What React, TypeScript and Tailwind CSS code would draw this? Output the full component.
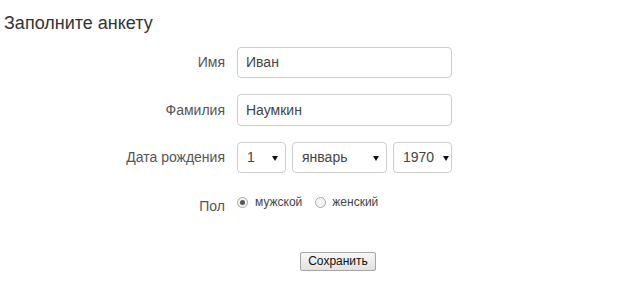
import React from "react";

const Arrow = () => (
  <svg width="6" height="6" viewBox="0 0 6 6" className="block">
    <path d="M0 1 L6 1 L3 6 Z" fill="#111" />
  </svg>
);

const Sel = ({ w, text, pr }: { w: string; text: string; pr: string }) => (
  <div
    className={`${w} ${pr} h-[31px] border border-[#cccccc] rounded-[4px] bg-white flex items-center justify-between pl-[9px] text-[14px] text-[#444]`}
  >
    <span>{text}</span>
    <Arrow />
  </div>
);

export default function App() {
  return (
    <div
      className="w-[626px] h-[283px] bg-white relative"
      style={{ fontFamily: '"Liberation Sans", Arial, sans-serif' }}
    >
      <div className="pt-[13px] pl-[4px] text-[18px] leading-[21px] text-[#333]">
        Заполните анкету
      </div>
      <div className="mt-[13px] grid grid-cols-[225px_215px] gap-x-[12px] text-[14px]">
        <div className="h-[31px] flex items-center justify-end text-[#555]">Имя</div>
        <div className="h-[31px] border border-[#cccccc] rounded-[4px] flex items-center pl-[8px] text-[#444]">
          Иван
        </div>

        <div className="mt-[16px] h-[32px] flex items-center justify-end text-[#555]">Фамилия</div>
        <div className="mt-[16px] h-[32px] border border-[#cccccc] rounded-[4px] flex items-center pl-[8px] text-[#444]">
          Наумкин
        </div>

        <div className="mt-[16px] h-[31px] flex items-center justify-end text-[#555]">Дата рождения</div>
        <div className="mt-[16px] h-[31px] flex gap-[6px]">
          <Sel w="w-[49px]" pr="pr-[7px]" text="1" />
          <Sel w="w-[95px]" pr="pr-[7px]" text="январь" />
          <Sel w="w-[59px]" pr="pr-[2px]" text="1970" />
        </div>

        <div className="mt-[19px] h-[20px] flex items-center justify-end text-[#555] pt-[8px]">Пол</div>
        <div className="mt-[19px] h-[20px] flex items-center text-[12px] text-[#444]">
          <span className="w-[11px] h-[11px] rounded-full border border-[#aaa] bg-[#f4f4f4] flex items-center justify-center">
            <span className="w-[5px] h-[5px] rounded-full bg-[#555]" />
          </span>
          <span className="ml-[7px]">мужской</span>
          <span className="ml-[13px] w-[11px] h-[11px] rounded-full border border-[#aaa] bg-[#f4f4f4]" />
          <span className="ml-[6px]">женский</span>
        </div>

        <div />
        <div className="mt-[40px]">
          <button className="ml-[63px] w-[76px] h-[19px] border border-[#a5a5a5] rounded-[2px] bg-gradient-to-b from-[#f8f8f8] to-[#e2e2e2] text-[12px] leading-[17px] text-[#111] flex items-center justify-center">
            Сохранить
          </button>
        </div>
      </div>
    </div>
  );
}
